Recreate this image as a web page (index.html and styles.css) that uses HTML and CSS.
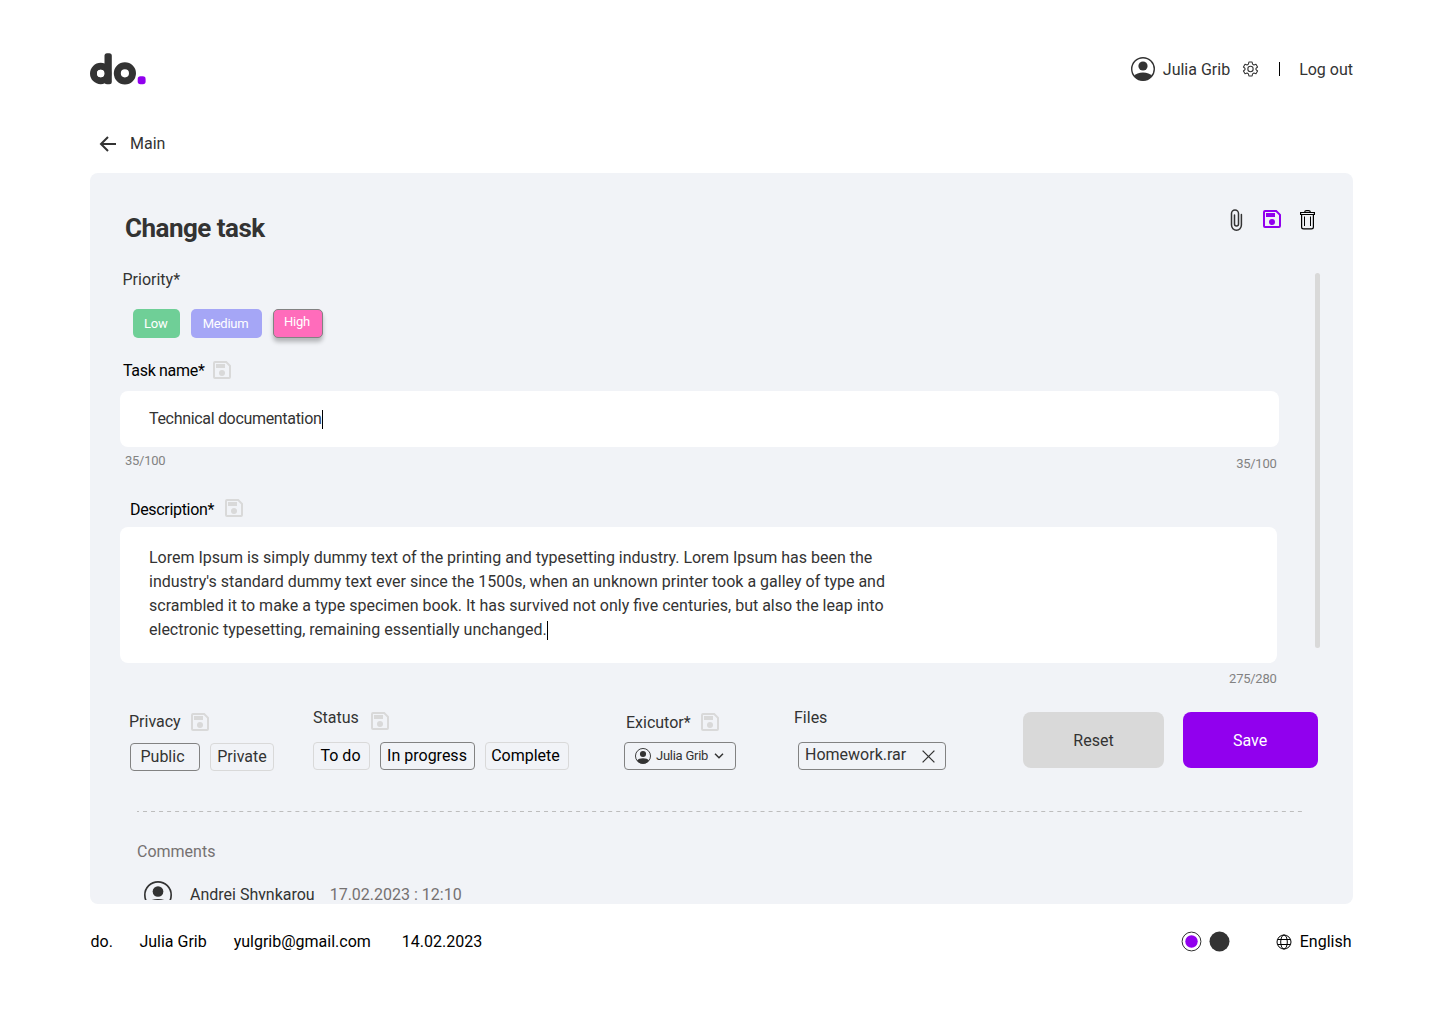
FILE: index.html
```html
<!DOCTYPE html>
<html lang="en">
<head>
<meta charset="utf-8">
<title>do. – Change task</title>
<link rel="stylesheet" href="styles.css">
</head>
<body>
<svg class="sprite" width="0" height="0" aria-hidden="true">
  <symbol id="save" viewBox="0 0 18 18">
    <path fill-rule="evenodd" d="M2 0H13.6L18 4.4V16a2 2 0 0 1-2 2H2a2 2 0 0 1-2-2V2A2 2 0 0 1 2 0ZM2 2V16H16V5.2L12.8 2ZM3 3H12V7H3ZM9 9a3 3 0 1 1 0 6 3 3 0 0 1 0-6Z"/>
  </symbol>
  <symbol id="user" viewBox="0 0 24 24">
    <circle cx="12" cy="12" r="11.3" fill="none" stroke="currentColor" stroke-width="1.4"/>
    <circle cx="12" cy="9" r="4.6"/>
    <path d="M3 19C4.600 16.600 8 15.400 12 15.400S19.400 16.600 21 19C18.800 22 15.600 23.400 12 23.400S5.200 22 3 19Z"/>
  </symbol>
</svg>

<div class="page">
  <header class="header">
    <svg class="logo" width="56" height="32" viewBox="0 0 56 32" role="img" aria-label="do.">
      <circle cx="10.700" cy="20.500" r="7.200" fill="none" stroke="#333" stroke-width="7"/>
      <rect x="14.500" y="0.300" width="7.300" height="30.900" rx="2.500" fill="#333"/>
      <circle cx="10.700" cy="20.500" r="3.700" fill="#fff"/>
      <circle cx="34.900" cy="20.300" r="7.600" fill="none" stroke="#333" stroke-width="7"/>
      <rect x="47.700" y="23.300" width="7.900" height="7.900" rx="2.700" fill="#9100ee"/>
    </svg>
    <div class="account">
      <svg class="user-lg" width="24" height="24"><use href="#user"/></svg>
      <span class="account-name">Julia Grib</span>
      <svg class="gear" width="17" height="16" viewBox="0 0 25.500 24" fill="none" stroke="#333" stroke-width="1.600" stroke-linejoin="round">
        <path d="M10.350 1.500h4.800l.7 3.200 2 1.200 3.100-1 2.400 4.100-2.400 2.200v1.600l2.400 2.200-2.400 4.100-3.100-1-2 1.200-.7 3.200h-4.800l-.7-3.200-2-1.200-3.100 1L2.150 15l2.400-2.200v-1.600L2.150 9l2.400-4.100 3.100 1 2-1.200Z"/>
        <circle cx="12.750" cy="12" r="4"/>
      </svg>
      <span class="bar"></span>
      <a class="logout">Log out</a>
    </div>
  </header>

  <nav class="back">
    <svg width="18" height="16" viewBox="0 0 18 16" fill="none" stroke="#333" stroke-width="2"><path d="M17 8H2.500M9 1L2 8l7 7"/></svg>
    <span>Main</span>
  </nav>

  <main class="panel">
    <div class="panel-head">
      <h1>Change task</h1>
      <div class="actions">
        <svg width="14" height="22" viewBox="0 0 14 22" fill="none" stroke="#333" stroke-width="1.500" stroke-linecap="round"><path d="M11.400 5.500V16a4.900 5.200 0 0 1-9.900 0V4.500a3.500 3.600 0 0 1 7 0V15a2 2 0 0 1-4 0V6"/></svg>
        <svg class="save-active" width="18" height="18"><use href="#save"/></svg>
        <svg width="15" height="20" viewBox="0 0 15 20" fill="none" stroke="#000"><path stroke-width="1.200" d="M.6 2.500H14.400V4.500H.6ZM4.500 2.500Q4.800 .6 6.500 .6h2Q10.200 .6 10.500 2.500M1.600 4.500V17Q1.600 18.900 3.600 18.900h7.800Q13.400 18.900 13.400 17V4.500"/><path d="M4.500 6.500V16M10.500 6.500V16"/></svg>
      </div>
    </div>

    <div class="panel-body">
      <form class="form">
        <div class="label priority-label">Priority*</div>
        <div class="chips">
          <span class="chip low">Low</span>
          <span class="chip medium">Medium</span>
          <span class="chip high">High</span>
        </div>

        <div class="label name-label"><span>Task name*</span><svg class="save" width="18" height="18"><use href="#save"/></svg></div>
        <div class="field name-field">Technical documentation<i class="caret"></i></div>
        <div class="counts"><span>35/100</span><span class="count-right">35/100</span></div>

        <div class="label desc-label"><span>Description*</span><svg class="save" width="18" height="18"><use href="#save"/></svg></div>
        <div class="field desc-field">Lorem Ipsum is simply dummy text of the printing and typesetting industry. Lorem Ipsum has been the<br>industry's standard dummy text ever since the 1500s, when an unknown printer took a galley of type and<br>scrambled it to make a type specimen book. It has survived not only five centuries, but also the leap into<br>electronic typesetting, remaining essentially unchanged.<i class="caret"></i></div>
        <div class="desc-count">275/280</div>
      </form>
      <div class="scrollbar"></div>
    </div>

    <div class="options">
      <section class="group privacy">
        <div class="label"><span>Privacy</span><svg class="save" width="18" height="18"><use href="#save"/></svg></div>
        <div class="tags"><span class="tag selected">Public</span><span class="tag">Private</span></div>
      </section>
      <section class="group status">
        <div class="label"><span>Status</span><svg class="save" width="18" height="18"><use href="#save"/></svg></div>
        <div class="tags"><span class="tag todo">To do</span><span class="tag selected progress">In progress</span><span class="tag complete">Complete</span></div>
      </section>
      <section class="group executor">
        <div class="label"><span>Exicutor*</span><svg class="save" width="18" height="18"><use href="#save"/></svg></div>
        <div class="tag selected select">
          <svg class="user-sm" width="16" height="16"><use href="#user"/></svg>
          <span>Julia Grib</span>
          <svg width="10" height="6" viewBox="0 0 10 6" fill="none" stroke="#333" stroke-width="1.500"><path d="M1 .7L5 4.700 9 .7"/></svg>
        </div>
      </section>
      <section class="group files">
        <div class="label">Files</div>
        <div class="tag selected file">
          <span>Homework.rar</span>
          <svg width="13" height="13" viewBox="0 0 13 13" stroke="#333" stroke-width="1.300"><path d="M.6.6L12.400 12.400M12.400.6L.6 12.400"/></svg>
        </div>
      </section>
      <button class="btn reset">Reset</button>
      <button class="btn submit">Save</button>
    </div>

    <svg class="divider" width="1166" height="1"><path d="M0 .5H1166" stroke="#bdbdbd" stroke-dasharray="4 4.020" stroke-dashoffset="2"/></svg>

    <section class="comments">
      <div class="comments-title">Comments</div>
      <div class="comment">
        <svg width="28" height="28"><use href="#user"/></svg>
        <span class="author">Andrei Shynkarou</span>
        <time>17.02.2023 : 12:10</time>
      </div>
    </section>
  </main>

  <footer class="footer">
    <span class="f-brand">do.</span>
    <span class="f-name">Julia Grib</span>
    <span class="f-mail">yulgrib@gmail.com</span>
    <span>14.02.2023</span>
    <div class="themes">
      <svg width="21" height="20"><circle cx="10.500" cy="9.500" r="9.400" fill="#fff" stroke="#333"/><circle cx="10.500" cy="9.500" r="6.200" fill="#9100ee"/></svg>
      <svg width="21" height="20"><circle cx="10.500" cy="9.500" r="10" fill="#333"/></svg>
    </div>
    <svg class="globe" width="16" height="16" viewBox="0 0 16 16" fill="none" stroke="#000" stroke-width="1"><circle cx="8" cy="8" r="7"/><ellipse cx="8" cy="8" rx="3.300" ry="7"/><path d="M1.600 5.500H14.400M1.600 10.500H14.400"/></svg>
    <span>English</span>
  </footer>
</div>
</body>
</html>
```
FILE: styles.css
```css
* { box-sizing: border-box; }

body {
  margin: 0;
  background: #fff;
  color: #333;
  font: 16px/24px Roboto, "Liberation Sans", sans-serif;
}

svg { display: block; flex: none; overflow: visible; }
.sprite { position: absolute; }

.page {
  width: 1440px;
  height: 1024px;
  padding: 45px 87px 0 90px;
  overflow: hidden;
}

/* Header */
.header {
  display: flex;
  justify-content: space-between;
  height: 48px;
}
.logo { margin-top: 8px; }
.account { display: flex; align-items: center; }
.account-name, .logout { padding-top: 2px; }
.user-lg { margin-right: 8px; }
.gear { margin-left: 12px; }
.bar { width: 1px; height: 14px; margin: 0 19px 0 20px; background: #000; }

.back {
  display: flex;
  align-items: center;
  gap: 13px;
  height: 24px;
  margin-top: 39px;
  padding-left: 9px;
}

/* Task panel */
.panel {
  height: 731px;
  margin-top: 17px;
  padding: 32px 0 4px 30px;
  border-radius: 8px;
  background: #f1f3f7;
}
.panel-head {
  display: flex;
  justify-content: space-between;
  height: 46px;
  padding: 0 38px 0 5px;
}
h1 {
  margin: 0;
  font-size: 26px;
  line-height: 46px;
  letter-spacing: -0.02em;
}
.actions { display: flex; align-items: center; gap: 19px; height: 29px; }
.save-active { margin-bottom: 1px; fill: #9100ee; }
.save { fill: #d9d9d9; }

.panel-body { display: flex; height: 450px; margin-top: 16px; }
.form { width: 1159px; }
.scrollbar {
  width: 5px;
  height: 375px;
  margin: 6px 0 0 36px;
  border-radius: 3px;
  background: #d9d9d9;
}

.label { display: flex; align-items: center; height: 24px; }
.priority-label { margin: 1px 0 0 2.500px; }
.chips { display: flex; height: 29px; margin: 17px 0 0 13px; }
.chip {
  border-radius: 5px;
  color: #fff;
  font-size: 13px;
  line-height: 29px;
  letter-spacing: -0.02em;
  text-align: center;
}
.low { width: 46.500px; background: #6fcf97; }
.medium { width: 71px; margin-left: 11px; background: #a5a6f6; }
.low, .medium { padding-right: 1px; }
.high {
  width: 50px;
  margin-left: 11.500px;
  padding-right: 2px;
  border: 1px solid #828282;
  background: #ff6cbb;
  line-height: 24px;
  box-shadow: 0 4px 4px rgba(0, 0, 0, .25);
}

.name-label, .desc-label { color: #000; letter-spacing: -0.02em; }
.name-label span { padding-top: 2px; }
.desc-label span { padding-top: 3px; }
.name-label { gap: 9px; margin: 20px 0 0 3px; }
.desc-label { gap: 11px; margin: 21px 0 0 10px; }

.field { border-radius: 8px; background: #fff; }
.name-field {
  height: 56px;
  margin-top: 9px;
  padding: 16px 29px;
  letter-spacing: -0.02em;
}
.desc-field { width: 1157px; height: 136px; margin-top: 7px; padding: 19px 29px; }
.caret {
  display: inline-block;
  width: 1px;
  height: 19px;
  background: #000;
  vertical-align: -5px;
}
.name-field .caret { margin-left: 1px; }

.counts, .desc-count { color: #828282; font-size: 13px; line-height: 20px; letter-spacing: -0.02em; }
.counts { display: flex; justify-content: space-between; height: 28px; padding: 4px 2.500px 0 5px; }
.count-right { margin-top: 3px; }
.desc-count { margin-top: 6px; padding-right: 2.500px; text-align: right; }

/* Task options */
.options { display: flex; height: 62px; margin-top: -7px; }
.group { display: flex; flex-direction: column; justify-content: space-between; height: 61px; }
.tags { display: flex; }
.tag {
  height: 28px;
  border: 1px solid #d9d9d9;
  border-radius: 4px;
  line-height: 26px;
  text-align: center;
}
.tag.selected { border-color: #828282; }

.privacy { width: 144px; margin-left: 10px; }
.privacy .label { gap: 10px; margin: 0 0 0 -1px; }
.privacy .tags { gap: 10px; }
.privacy .tag { width: 64px; }
.privacy .tag.selected { width: 70px; padding-right: 5px; }

.status { width: 256px; height: 60px; margin-left: 39px; }
.status .label { gap: 12px; align-items: flex-start; margin-top: -4px; height: 28px; }
.status .save { margin-top: 6px; }
.status .tags { color: #000; }
.todo { width: 57px; padding-right: 2px; }
.progress { width: 95px; margin: 0 10px; padding-right: 1px; }
.complete { width: 84px; padding-right: 3px; }

.executor { width: 112px; height: 60px; margin-left: 55px; }
.executor .label { gap: 10px; margin-top: 1px; padding-left: 2px; }
.executor .save { margin-bottom: 2px; }
.select {
  display: flex;
  align-items: center;
  gap: 5.500px;
  padding-left: 9.500px;
  font-size: 13px;
  letter-spacing: -0.02em;
}

.files { width: 148px; height: 60px; margin-left: 62px; }
.files .label { margin: -4px 0 0 -4px; }
.file { display: flex; justify-content: space-between; padding: 0 10px 0 6px; line-height: 24px; }
.file svg { margin-top: 7px; }

.btn {
  height: 56px;
  margin-top: 2px;
  padding: 1px 0 0;
  border: 0;
  border-radius: 8px;
  font: inherit;
  color: #333;
  background: #d9d9d9;
}
.reset { width: 141px; margin-left: 77px; }
.submit { width: 135px; margin-left: 19px; padding-right: 1px; color: #fff; background: #9100ee; }

.divider { margin: 39px 0 0 17px; }

.comments { height: 60px; margin-top: 28px; padding-left: 17px; overflow: hidden; color: #757171; }
.comment { display: flex; margin: 15px 0 0 7px; }
.author { margin: 4px 15px 0 18px; color: #333; }
.comment time { margin-top: 4px; }
.comment svg { margin-top: 2px; color: #333; fill: #333; }
.user-lg, .user-sm { fill: #333; }

/* Footer */
.footer { display: flex; align-items: center; height: 24px; margin-top: 26px; color: #000; }
.f-brand { padding-left: .5px; }
.f-name { margin-left: 26.500px; }
.f-mail { margin: 0 31px 0 27px; }
.themes { display: flex; gap: 7px; margin-left: auto; }
.globe { margin: 0 7.500px 0 46px; }
.footer > span:last-child { margin-right: 1.500px; }
```
